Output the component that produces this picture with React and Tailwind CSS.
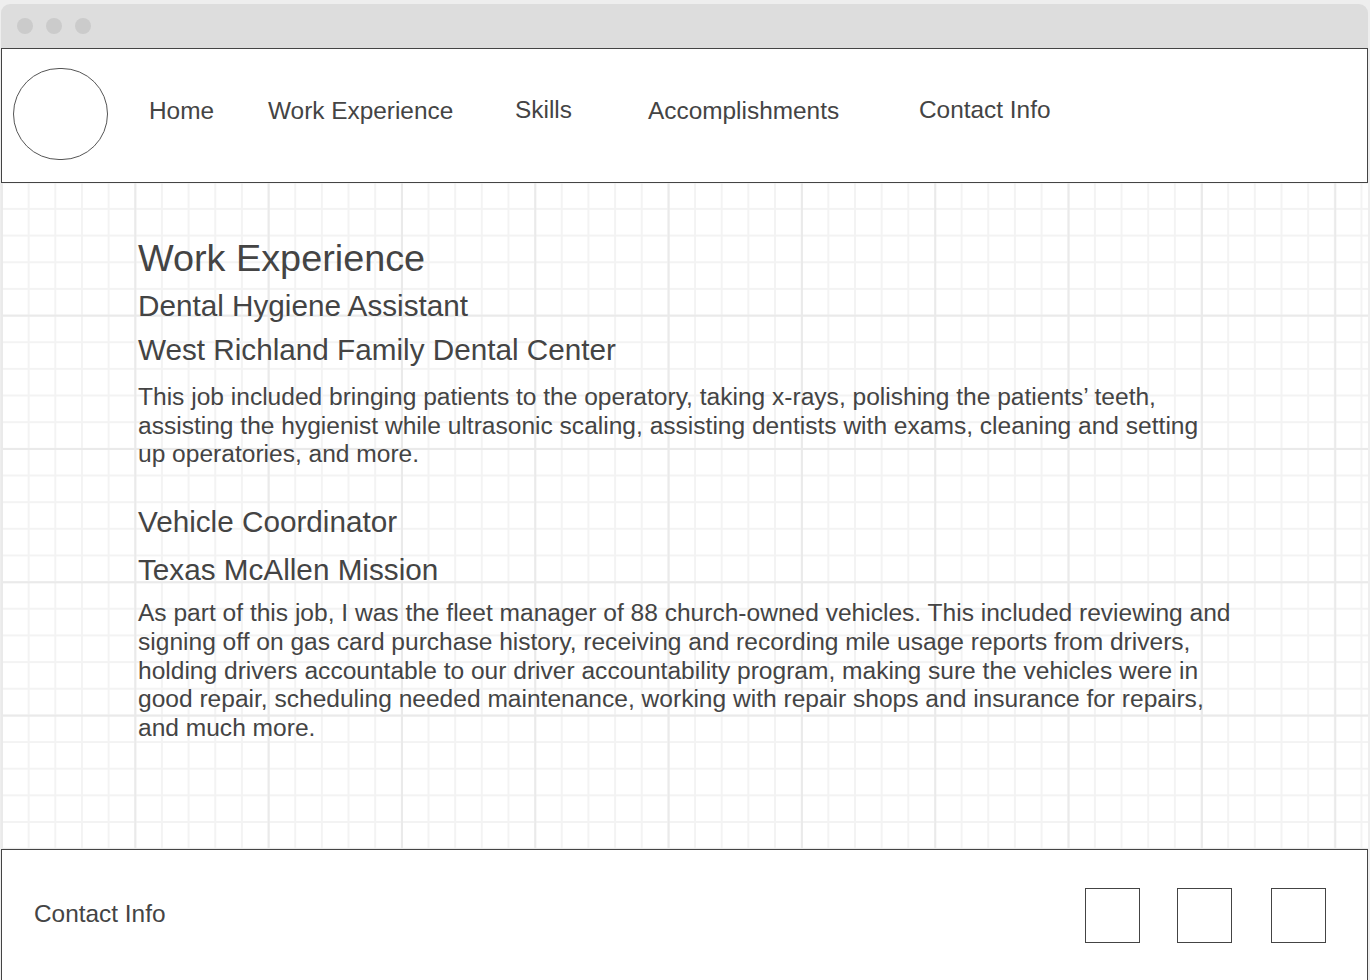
import React from "react";

export default function App() {
  const font = { fontFamily: '"Liberation Sans", Arial, sans-serif' };
  return (
    <div
      className="w-[1370px] h-[980px] overflow-hidden bg-[#eeeeee] text-[#444444]"
      style={font}
    >
      <div className="ml-[1px] w-[1367px] pt-[4px] flex flex-col">
        {/* browser chrome */}
        <div className="h-[44px] rounded-t-[9px] bg-[#dddddd] flex items-center pl-[16px] gap-[13px]">
          <div className="w-[16px] h-[16px] rounded-full bg-[#cbcbcb]" />
          <div className="w-[16px] h-[16px] rounded-full bg-[#cbcbcb]" />
          <div className="w-[16px] h-[16px] rounded-full bg-[#cbcbcb]" />
        </div>

        {/* page with grid background */}
        <div className="flex flex-col bg-white bg-[linear-gradient(to_right,#eaeaea_2px,transparent_2px),linear-gradient(to_bottom,#eaeaea_2px,transparent_2px),linear-gradient(to_right,#f3f3f3_2px,transparent_2px),linear-gradient(to_bottom,#f3f3f3_2px,transparent_2px)] bg-[size:133.333px_133.333px,133.333px_133.333px,26.667px_26.667px,26.667px_26.667px]">
          {/* header */}
          <header className="h-[135px] border border-[#444444] bg-white flex items-start">
            <div className="mt-[19px] ml-[11px] w-[95px] h-[92px] rounded-full border border-[#555555] shrink-0" />
            <nav className="flex items-start ml-[41px] mt-[48px] text-[24.4px] leading-[28px]">
              <div className="w-[119px]">Home</div>
              <div className="w-[247px]">Work Experience</div>
              <div className="w-[133px] -mt-[1px]">Skills</div>
              <div className="w-[271px]">Accomplishments</div>
              <div className="-mt-[1px]">Contact Info</div>
            </nav>
          </header>

          {/* main content */}
          <main className="h-[666px] pl-[137px] pt-[53px] flex flex-col whitespace-nowrap">
            <h1 className="text-[37.8px] leading-[44px]">Work Experience</h1>
            <h2 className="mt-[4px] text-[29.7px] leading-[44px]">Dental Hygiene Assistant</h2>
            <h3 className="text-[29.7px] leading-[44px]">West Richland Family Dental Center</h3>
            <p className="mt-[11px] text-[24.55px] leading-[28.7px]">
              <span className="block">This job included bringing patients to the operatory, taking x-rays, polishing the patients’ teeth,</span>
              <span className="block">assisting the hygienist while ultrasonic scaling, assisting dentists with exams, cleaning and setting</span>
              <span className="block">up operatories, and more.</span>
            </p>

            <h2 className="mt-[31px] text-[29.7px] leading-[44px]">Vehicle Coordinator</h2>
            <h3 className="mt-[4px] text-[29.7px] leading-[44px]">Texas McAllen Mission</h3>
            <p className="mt-[7px] text-[24.55px] leading-[28.7px]">
              <span className="block">As part of this job, I was the fleet manager of 88 church-owned vehicles. This included reviewing and</span>
              <span className="block">signing off on gas card purchase history, receiving and recording mile usage reports from drivers,</span>
              <span className="block">holding drivers accountable to our driver accountability program, making sure the vehicles were in</span>
              <span className="block">good repair, scheduling needed maintenance, working with repair shops and insurance for repairs,</span>
              <span className="block">and much more.</span>
            </p>
          </main>

          {/* footer */}
          <footer className="h-[150px] border border-[#444444] bg-white flex items-start">
            <div className="ml-[32px] mt-[50px] text-[24.4px] leading-[28px]">Contact Info</div>
            <div className="ml-auto mr-[41px] mt-[38px] flex items-start">
              <div className="w-[55px] h-[55px] border border-[#444444]" />
              <div className="ml-[37px] w-[55px] h-[55px] border border-[#444444]" />
              <div className="ml-[39px] w-[55px] h-[55px] border border-[#444444]" />
            </div>
          </footer>
        </div>
      </div>
    </div>
  );
}
